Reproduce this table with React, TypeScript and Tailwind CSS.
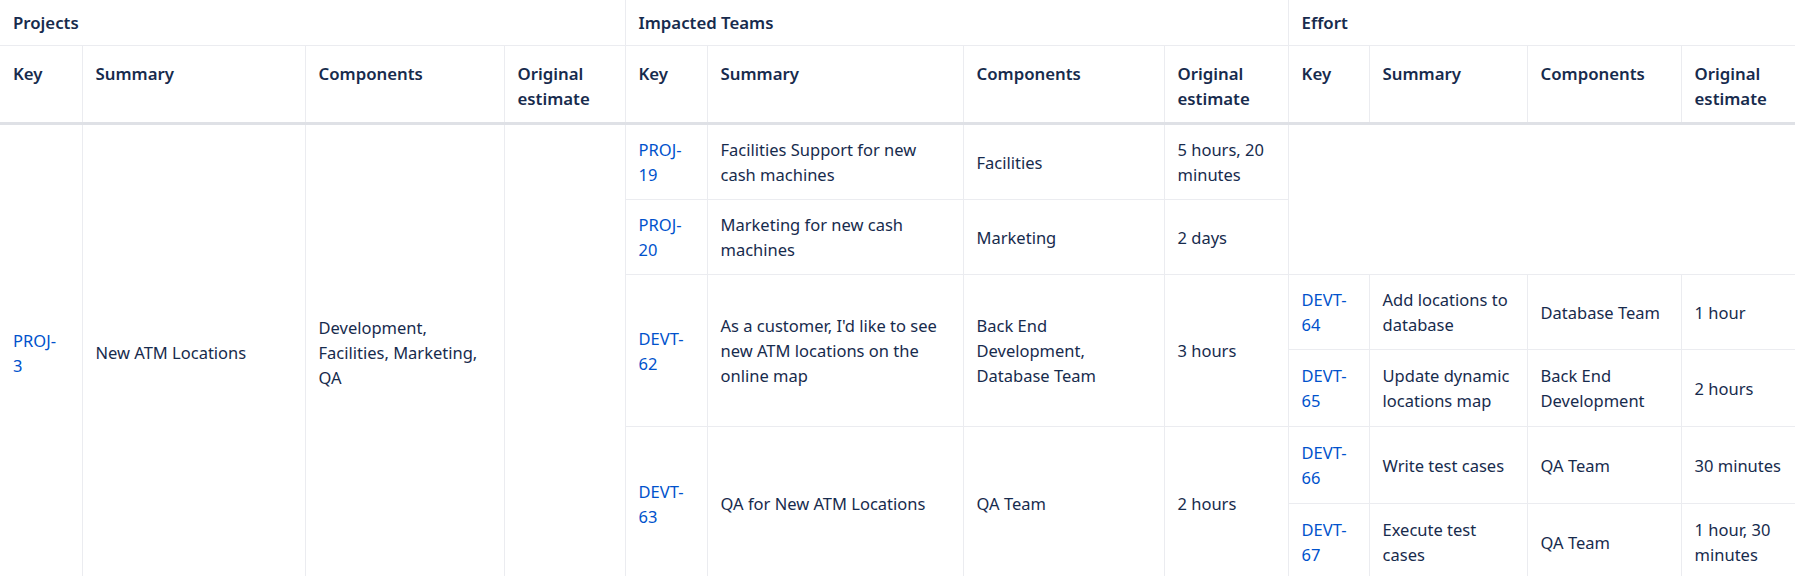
const cols = [82, 223, 199, 121, 82, 256, 201, 124, 81, 158, 154, 125];

const th = "border border-[#ebecf0] px-[13px] text-left align-top font-semibold text-[#172b4d] text-[16.8px]";
const td = "border border-[#ebecf0] px-[13px] py-[12px] align-middle text-[#172b4d]";
const link = "text-[#0052cc]";

function Key({ id }: { id: string }) {
  const [pre, num] = id.split("-");
  return (
    <a className={link} href="#">
      {pre}-<br />
      {num}
    </a>
  );
}

function Row({ k, summary, comp, est, span = 1 }: { k: string; summary: string; comp: React.ReactNode; est: React.ReactNode; span?: number }) {
  return (
    <>
      <td rowSpan={span} className={td}>
        <Key id={k} />
      </td>
      <td rowSpan={span} className={td}>{summary}</td>
      <td rowSpan={span} className={td}>{comp}</td>
      <td rowSpan={span} className={td}>{est}</td>
    </>
  );
}

export default function App() {
  return (
    <div
      className="w-full h-[576px] overflow-hidden bg-white text-[16.5px] leading-[25px]"
      style={{ fontFamily: '"Noto Sans", "Open Sans", sans-serif' }}
    >
      <table className="table-fixed border-collapse w-[1806px]">
        <colgroup>
          {cols.map((w, i) => (
            <col key={i} style={{ width: w }} />
          ))}
        </colgroup>
        <thead>
          <tr>
            <th colSpan={4} className={`${th} py-[10px] border-t-0 border-l-0`}>Projects</th>
            <th colSpan={4} className={`${th} py-[10px] border-t-0`}>Impacted Teams</th>
            <th colSpan={4} className={`${th} py-[10px] border-t-0`}>Effort</th>
          </tr>
          <tr>
            {[0, 1, 2].map((g) => (
              <HeaderGroup key={g} first={g === 0} />
            ))}
          </tr>
        </thead>
        <tbody>
          <tr className="h-[75px]">
            <td rowSpan={6} className={`${td} border-l-0`}>
              <Key id="PROJ-3" />
            </td>
            <td rowSpan={6} className={td}>New ATM Locations</td>
            <td rowSpan={6} className={td}>
              Development,
              <br />
              Facilities, Marketing,
              <br />
              QA
            </td>
            <td rowSpan={6} className={td}></td>
            <Row k="PROJ-19" summary="Facilities Support for new cash machines" comp="Facilities" est="5 hours, 20 minutes" />
            <td rowSpan={2} colSpan={4} className={td}></td>
          </tr>
          <tr className="h-[75px]">
            <Row k="PROJ-20" summary="Marketing for new cash machines" comp="Marketing" est="2 days" />
          </tr>
          <tr className="h-[75px]">
            <Row
              k="DEVT-62"
              span={2}
              summary="As a customer, I'd like to see new ATM locations on the online map"
              comp={
                <>
                  Back End
                  <br />
                  Development,
                  <br />
                  Database Team
                </>
              }
              est="3 hours"
            />
            <Row k="DEVT-64" summary="Add locations to database" comp="Database Team" est="1 hour" />
          </tr>
          <tr className="h-[77px]">
            <Row k="DEVT-65" summary="Update dynamic locations map" comp="Back End Development" est="2 hours" />
          </tr>
          <tr className="h-[77px]">
            <Row k="DEVT-63" span={2} summary="QA for New ATM Locations" comp="QA Team" est="2 hours" />
            <Row k="DEVT-66" summary="Write test cases" comp="QA Team" est="30 minutes" />
          </tr>
          <tr className="h-[77px]">
            <Row k="DEVT-67" summary="Execute test cases" comp="QA Team" est="1 hour, 30 minutes" />
          </tr>
        </tbody>
      </table>
    </div>
  );
}

function HeaderGroup({ first }: { first: boolean }) {
  const base = `${th} pt-[15px] pb-[11px] border-b-[3px] border-b-[#dfe1e6]`;
  return (
    <>
      <th className={`${base} ${first ? "border-l-0" : ""}`}>Key</th>
      <th className={base}>Summary</th>
      <th className={base}>Components</th>
      <th className={base}>
        Original
        <br />
        estimate
      </th>
    </>
  );
}
